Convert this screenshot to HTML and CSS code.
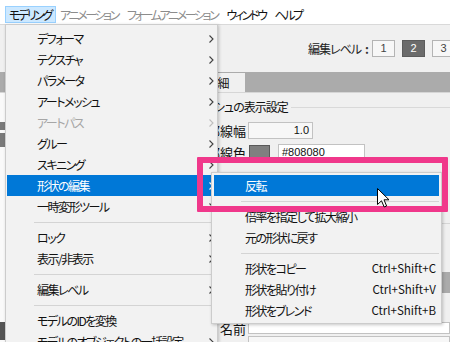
FILE: index.html
```html
<!DOCTYPE html>
<html lang="ja">
<head>
    <meta charset="UTF-8">
    <meta name="viewport" content="width=device-width, initial-scale=1.0">
    <title>モデリング メニュー</title>
    <link rel="stylesheet" href="styles.css">
</head>
<body>
    <div class="menubar">
        <span class="menubar-item active">モデリング</span>
        <span class="menubar-item disabled">アニメーション</span>
        <span class="menubar-item disabled">フォームアニメーション</span>
        <span class="menubar-item">ウィンドウ</span>
        <span class="menubar-item">ヘルプ</span>
    </div>

    <div class="toolbar">
        <span class="level-label">編集レベル</span>
        <span class="level-colon">:</span>
        <span class="level-btn">1</span>
        <span class="level-btn current">2</span>
        <span class="level-btn">3</span>
    </div>

    <div class="tabbar">
        <span class="tab">詳細</span>
    </div>

    <div class="workspace">
        <div class="side">
            <div class="side-row dark"></div>
            <div class="side-row dark tall"></div>
            <div class="side-row bottom"></div>
        </div>
        <div class="panel">
            <div class="group-title">
                <span>メッシュの表示設定</span>
                <span class="group-line"></span>
            </div>
            <div class="field">
                <span class="field-label">輪郭線幅</span>
                <span class="box num">1.0</span>
            </div>
            <div class="field">
                <span class="field-label">輪郭線色</span>
                <span class="swatch"></span>
                <span class="box hex">#808080</span>
            </div>
            <div class="divider"></div>
            <div class="subbar"></div>
            <div class="field name">
                <span class="field-label">名前</span>
                <span class="box text"></span>
            </div>
            <div class="box area"></div>
        </div>
    </div>

    <!-- dropdown of モデリング -->
    <div class="menu main-menu">
        <div class="item">デフォーマ<svg class="chev" width="5" height="8" viewBox="0 0 5 8"><polyline points="0.5,0.5 4,4 0.5,7.5"/></svg></div>
        <div class="item">テクスチャ<svg class="chev" width="5" height="8" viewBox="0 0 5 8"><polyline points="0.5,0.5 4,4 0.5,7.5"/></svg></div>
        <div class="item">パラメータ<svg class="chev" width="5" height="8" viewBox="0 0 5 8"><polyline points="0.5,0.5 4,4 0.5,7.5"/></svg></div>
        <div class="item">アートメッシュ<svg class="chev" width="5" height="8" viewBox="0 0 5 8"><polyline points="0.5,0.5 4,4 0.5,7.5"/></svg></div>
        <div class="item disabled">アートパス<svg class="chev" width="5" height="8" viewBox="0 0 5 8"><polyline points="0.5,0.5 4,4 0.5,7.5"/></svg></div>
        <div class="item">グルー<svg class="chev" width="5" height="8" viewBox="0 0 5 8"><polyline points="0.5,0.5 4,4 0.5,7.5"/></svg></div>
        <div class="item">スキニング<svg class="chev" width="5" height="8" viewBox="0 0 5 8"><polyline points="0.5,0.5 4,4 0.5,7.5"/></svg></div>
        <div class="item selected">形状の編集<svg class="chev" width="5" height="8" viewBox="0 0 5 8"><polyline points="0.5,0.5 4,4 0.5,7.5"/></svg></div>
        <div class="item">一時変形ツール<svg class="chev" width="5" height="8" viewBox="0 0 5 8"><polyline points="0.5,0.5 4,4 0.5,7.5"/></svg></div>
        <div class="sep"></div>
        <div class="item">ロック<svg class="chev" width="5" height="8" viewBox="0 0 5 8"><polyline points="0.5,0.5 4,4 0.5,7.5"/></svg></div>
        <div class="item">表示/非表示<svg class="chev" width="5" height="8" viewBox="0 0 5 8"><polyline points="0.5,0.5 4,4 0.5,7.5"/></svg></div>
        <div class="sep"></div>
        <div class="item">編集レベル<svg class="chev" width="5" height="8" viewBox="0 0 5 8"><polyline points="0.5,0.5 4,4 0.5,7.5"/></svg></div>
        <div class="sep"></div>
        <div class="item">モデルのIDを変換</div>
        <div class="item">モデルのオブジェクトの一括設定<svg class="chev" width="5" height="8" viewBox="0 0 5 8"><polyline points="0.5,0.5 4,4 0.5,7.5"/></svg></div>
    </div>

    <!-- submenu of 形状の編集 -->
    <div class="menu sub-menu">
        <div class="item selected">反転</div>
        <div class="sep"></div>
        <div class="item">倍率を指定して拡大縮小</div>
        <div class="item">元の形状に戻す</div>
        <div class="sep"></div>
        <div class="item">形状をコピー<span class="shortcut">Ctrl+Shift+C</span></div>
        <div class="item">形状を貼り付け<span class="shortcut">Ctrl+Shift+V</span></div>
        <div class="item">形状をブレンド<span class="shortcut">Ctrl+Shift+B</span></div>
    </div>

    <div class="callout"></div>

    <svg class="cursor" width="13" height="20" viewBox="0 0 13 20">
        <path d="M0.5 0.5 L0.5 16.5 L4.5 12.8 L7.2 19 L9.6 18 L7 11.8 L12 11.8 Z" fill="#fff" stroke="#000" stroke-width="1" stroke-linejoin="miter"/>
    </svg>
</body>
</html>
```

FILE: styles.css
```css
* {
    box-sizing: border-box;
}

html,
body {
    margin: 0;
}

body {
    position: relative;
    width: 450px;
    height: 342px;
    overflow: hidden;
    background: #f0f0f0;
    color: #111;
    font-family: "Noto Sans CJK JP", sans-serif;
    font-size: 12px;
    font-feature-settings: "palt";
    letter-spacing: -1px;
}

/* window menu bar */
.menubar {
    display: flex;
    align-items: flex-start;
    height: 25px;
    padding: 6px 0 0 5px;
    background: #fff;
    border-bottom: 1px solid #d9d9d9;
}

.menubar-item {
    height: 17px;
    line-height: 15px;
    padding: 0 4px 0 3px;
    border: 1px solid transparent;
    white-space: nowrap;
    letter-spacing: -2.4px;
}

.menubar-item.active {
    background: #cce8ff;
    border-color: #99d1ff;
}

.menubar-item.disabled {
    color: #8c8c8c;
}

/* edit level toolbar */
.toolbar {
    display: flex;
    align-items: center;
    gap: 7px;
    height: 47px;
    padding-left: 308px;
    white-space: nowrap;
}

.level-label {
    color: #222;
}

.level-colon {
    margin: 0 -3px 0 -3px;
    font-weight: bold;
    color: #333;
}

.level-btn {
    flex: none;
    width: 23px;
    height: 17px;
    line-height: 15px;
    text-align: center;
    font-family: "Liberation Sans", sans-serif;
    font-size: 11px;
    letter-spacing: 0;
    color: #444;
    background: #f7f7f7;
    border: 1px solid #b4b4b4;
}

.level-btn.current {
    background: #6b6b6b;
    border-color: #5c5c5c;
    color: #fff;
}

.tabbar {
    height: 20px;
    padding: 1px 0 0 190px;
    background: #ababab;
}

.tab {
    display: block;
    width: 55px;
    height: 19px;
    line-height: 19px;
    text-align: center;
    background: #f0f0f0;
}

/* property panel */
.workspace {
    display: flex;
    border-top: 1px solid #d6d6d6;
}

.side {
    width: 190px;
    padding-top: 29px;
    background: #fafafa;
}

.side-row {
    height: 8px;
    margin-bottom: 3px;
}

.side-row.dark {
    background: #7a7a7a;
}

.side-row.tall {
    height: 14px;
}

.side-row.bottom {
    height: 18px;
    margin-top: 175px;
    background: #555;
}

.panel {
    flex: 1;
    padding: 7px 0 0 6px;
}

.group-title {
    display: flex;
    align-items: center;
    gap: 3px;
    height: 14px;
    line-height: 14px;
    white-space: nowrap;
}

.group-line {
    flex: 1;
    height: 1px;
    background: #d9d9d9;
}

.field {
    display: flex;
    align-items: center;
    gap: 2px;
    height: 17px;
    margin-top: 8px;
}

.field + .field {
    margin-top: 5px;
}

.field-label {
    display: flex;
    justify-content: flex-end;
    flex: none;
    width: 50px;
    white-space: nowrap;
    font-size: 13px;
    letter-spacing: 0;
}

.box {
    display: block;
    height: 17px;
    line-height: 15px;
    padding: 0 3px;
    background: #fff;
    border: 1px solid #c2c2c2;
    font-family: "Liberation Sans", sans-serif;
    font-size: 11px;
    letter-spacing: 0;
}

.box.num {
    width: 65px;
    text-align: right;
    background: #f7f7f7;
}

.swatch {
    width: 21px;
    height: 16px;
    margin: 0 6px 0 1px;
    background: #808080;
    border: 1px solid #5a5a5a;
}

.box.hex {
    width: 87px;
}

.divider {
    height: 1px;
    margin-top: 62px;
    background: #d6d6d6;
}

.subbar {
    height: 21px;
    margin-top: 48px;
    background: #ababab;
}

.field.name {
    margin-top: 29px;
    height: 12px;
}

.box.text {
    flex: 1;
    height: 12px;
}

.box.area {
    height: 20px;
    margin: 2px 0 0 52px;
    background: #f7f7f7;
}

/* popup menus */
.menu {
    position: absolute;
    background: #f2f2f2;
    border: 1px solid #cccccc;
    box-shadow: 1px 1px 3px rgba(0, 0, 0, 0.22);
    letter-spacing: -1.5px;
}

.main-menu {
    left: 5px;
    top: 24px;
    width: 213px;
    height: 318px;
    padding: 3px 1px;
    border-bottom: none;
}

.sub-menu {
    left: 211px;
    top: 172px;
    width: 231px;
    padding: 2px;
}

.item {
    display: flex;
    align-items: center;
    justify-content: space-between;
    height: 21px;
    line-height: 21px;
    padding: 0 2px 0 30px;
    white-space: nowrap;
}

.sub-menu .item {
    padding: 0 3px 0 31px;
}

.item.selected {
    background: #0078d7;
    color: #fff;
}

.item.disabled {
    color: #a6a6a6;
}

.chev {
    flex: none;
    fill: none;
    stroke: #404040;
    stroke-width: 1.1;
}

.item.disabled .chev {
    stroke: #bdbdbd;
}

.item.selected .chev {
    stroke: #fff;
}

.shortcut {
    font-size: 11.5px;
    letter-spacing: 0;
}

.sep {
    display: flex;
    align-items: center;
    height: 10px;
    padding-left: 27px;
}

.sep::before {
    content: "";
    flex: 1;
    height: 1px;
    background: #d4d4d4;
}

/* annotation frame */
.callout {
    position: absolute;
    left: 197px;
    top: 157px;
    width: 251px;
    height: 55px;
    border: 6px solid #f0388b;
    border-radius: 1px;
}

.cursor {
    position: absolute;
    left: 377px;
    top: 188px;
}
```
